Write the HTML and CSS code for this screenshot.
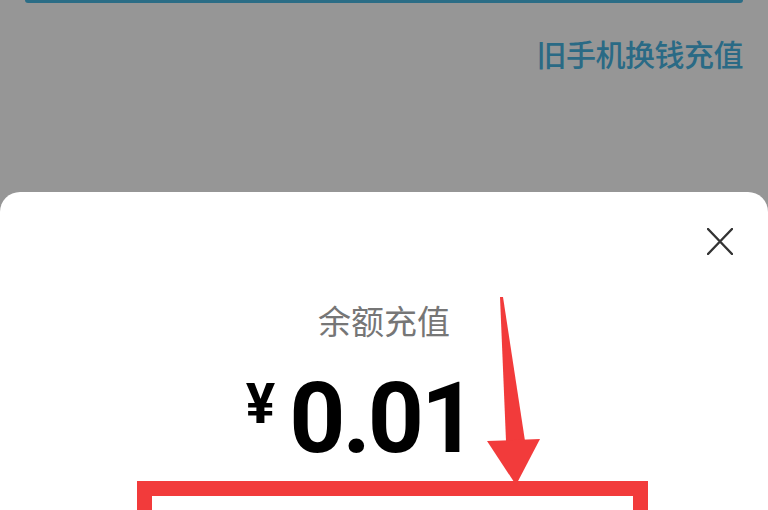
FILE: index.html
```html
<!DOCTYPE html>
<html lang="zh-CN">
<head>
<meta charset="utf-8">
<title>余额充值</title>
<link rel="stylesheet" href="styles.css">
</head>
<body>
<div class="page">
  <div class="backdrop">
    <div class="top-button"></div>
    <div class="link-row"><span class="link">旧手机换钱充值</span></div>
  </div>
  <div class="sheet">
    <div class="close-row">
      <svg class="close" viewBox="0 0 26 27" width="26" height="27" aria-label="关闭">
        <path d="M1 1 L25 26 M25 1 L1 26" stroke="#333" stroke-width="2.4" fill="none" stroke-linecap="round"/>
      </svg>
    </div>
    <div class="title">余额充值</div>
    <div class="amount-row">
      <span class="currency">¥</span>
      <span class="amount">0.01</span>
    </div>
    <div class="highlight"></div>
    <svg class="annot" viewBox="0 192 768 318" width="768" height="318">
      <polygon points="500,297 503,297 525,441 506,441" fill="#f23b3b"/>
      <polygon points="487,441 540,439 516,485" fill="#f23b3b"/>
    </svg>
  </div>
</div>
</body>
</html>
```

FILE: styles.css
```css
html, body {
  margin: 0;
  padding: 0;
}
body {
  width: 768px;
  height: 510px;
  overflow: hidden;
  background: #969696;
  font-family: "Noto Sans CJK SC", "Noto Sans", sans-serif;
}
.page {
  display: flex;
  flex-direction: column;
  height: 510px;
}
.backdrop {
  height: 192px;
  display: flex;
  flex-direction: column;
}
.top-button {
  margin: 0 25px 0 25px;
  height: 3px;
  background: #2b6d86;
  border-radius: 0 0 4px 4px;
}
.link-row {
  display: flex;
  justify-content: flex-end;
  padding-right: 25px;
  margin-top: 33px;
}
.link {
  font-size: 30px;
  line-height: 34px;
  font-weight: 500;
  color: #2a6a85;
  letter-spacing: -0.5px;
}
.sheet {
  position: relative;
  flex: 1;
  background: #ffffff;
  border-radius: 20px 20px 0 0;
  overflow: hidden;
  display: flex;
  flex-direction: column;
}
.close-row {
  display: flex;
  justify-content: flex-end;
  padding: 36px 35px 0 0;
  height: 27px;
}
.close {
  display: block;
}
.title {
  margin-top: 45px;
  text-align: center;
  font-size: 33px;
  line-height: 40px;
  font-weight: 400;
  color: #767676;
}
.amount-row {
  margin-top: 30px;
  display: flex;
  justify-content: center;
  align-items: flex-start;
  padding-right: 48px;
  gap: 14px;
  font-family: Roboto, "Liberation Sans", sans-serif;
  font-weight: 700;
  color: #000;
}
.currency {
  font-size: 55px;
  line-height: 55px;
  margin-top: 7px;
  letter-spacing: 0;
}
.amount {
  font-size: 98px;
  line-height: 98px;
  letter-spacing: -3px;
}
.highlight {
  margin-top: 13px;
  margin-left: 137px;
  width: 481px;
  height: 120px;
  border: 15px solid #f23b3b;
  flex-shrink: 0;
}
.annot {
  position: absolute;
  left: 0;
  top: 0;
  pointer-events: none;
}
```
